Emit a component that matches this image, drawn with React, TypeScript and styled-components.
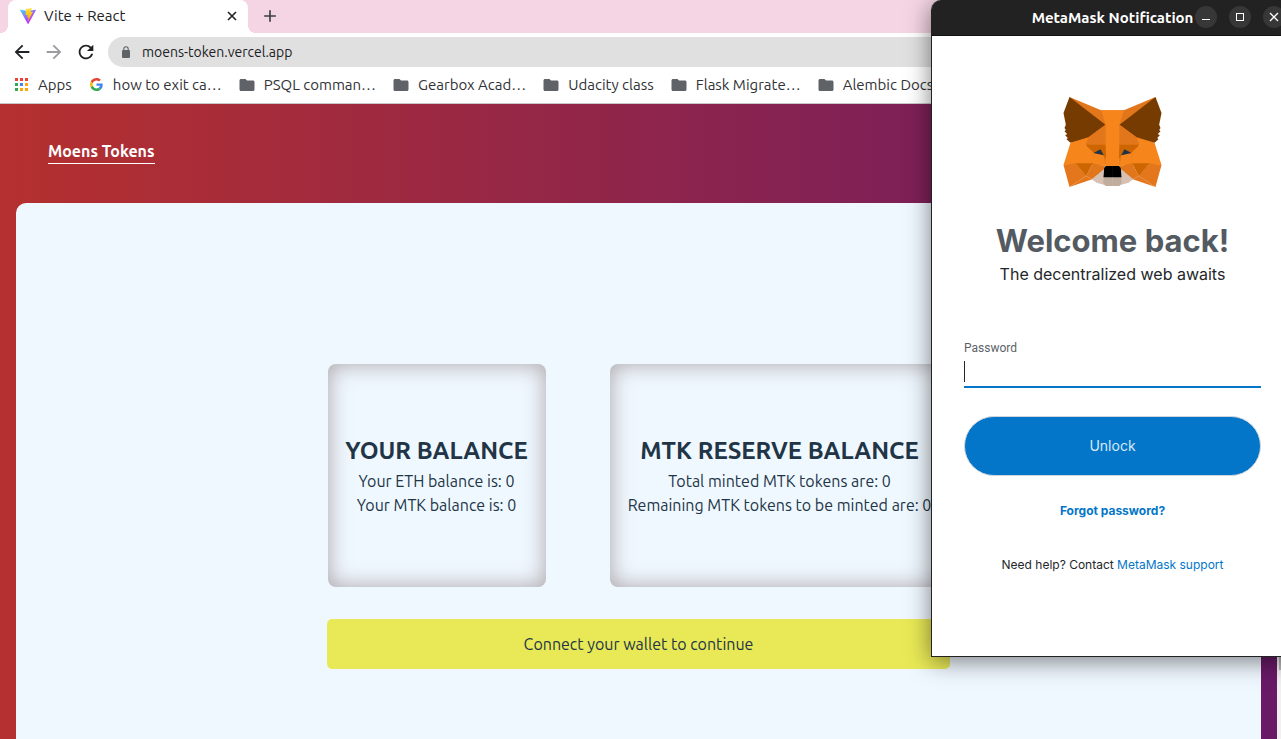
import React from "react";
import styled, { createGlobalStyle } from "styled-components";
import { MdArrowBack, MdArrowForward, MdRefresh, MdFolder, MdAdd } from "react-icons/md";

const uiFont = `"Ubuntu", "Noto Sans", "Open Sans", sans-serif`;
const walletFont = `"Euclid Circular B", "Inter", "Roboto", sans-serif`;

const GlobalStyle = createGlobalStyle`
  *, *::before, *::after { box-sizing: border-box; }
  body { margin: 0; overflow: hidden; font-family: ${uiFont}; }
  button, input { font: inherit; }
  button { border: 0; padding: 0; background: none; color: inherit; cursor: pointer; }
  h1, h2, p { margin: 0; }
`;

const Screen = styled.div`
  position: relative;
  display: flex;
  flex-direction: column;
  height: 100vh;
  overflow: hidden;
`;

/* ---- Browser chrome ---- */

const TabStrip = styled.div`
  display: flex;
  align-items: stretch;
  height: 33px;
  flex: none;
  padding-left: 8px;
  background: #f5d5e3;
`;

const Tab = styled.div`
  position: relative;
  display: flex;
  align-items: center;
  gap: 8px;
  width: 240px;
  padding: 0 8px 2px 12px;
  background: #fff;
  border-radius: 8px 8px 0 0;
  font-size: 15px;
  color: #202124;
  &::before, &::after {
    content: "";
    position: absolute;
    bottom: 0;
    width: 8px;
    height: 8px;
  }
  &::before { left: -8px; background: radial-gradient(circle at 0 0, transparent 8px, #fff 8px); }
  &::after { right: -8px; background: radial-gradient(circle at 100% 0, transparent 8px, #fff 8px); }
`;

const TabTitle = styled.span`flex: 1;`;

const IconButton = styled.button<{ $size: number; $color?: string }>`
  display: inline-flex;
  align-items: center;
  justify-content: center;
  flex: none;
  width: ${p => p.$size}px;
  height: ${p => p.$size}px;
  color: ${p => p.$color ?? "#202124"};
`;

const NewTab = styled(IconButton)`margin: 5px 0 0 11px;`;

const Toolbar = styled.div`
  display: flex;
  align-items: center;
  gap: 10px;
  flex: none;
  height: 37px;
  padding: 0 0 0 11px;
  background: #fff;
`;

const AddressBar = styled.label`
  display: flex;
  align-items: center;
  gap: 11px;
  flex: 1;
  height: 30px;
  margin-left: 1px;
  padding-left: 13px;
  border-radius: 15px 0 0 15px;
  background: #e0e0e0;
  color: #5f6368;
`;

const AddressInput = styled.input`
  flex: 1;
  border: 0;
  padding: 0;
  outline: 0;
  background: none;
  color: #202124;
  font-size: 14px;
`;

const Bookmarks = styled.nav`
  display: flex;
  align-items: center;
  gap: 18px;
  flex: none;
  height: 34px;
  padding: 0 0 4px 15px;
  border-bottom: 1px solid #c9c9c9;
  background: #fff;
`;

const Bookmark = styled.a`
  display: flex;
  align-items: center;
  gap: 10px;
  flex: none;
  color: #303236;
  font-size: 15px;
  line-height: 20px;
  text-decoration: none;
  white-space: nowrap;
`;

const FolderIcon = styled(MdFolder)`
  margin: 0 -2px;
  color: #5f6368;
`;

/* ---- Web page ---- */

const Viewport = styled.div`
  display: flex;
  flex: 1;
  min-height: 0;
`;

const Page = styled.div`
  display: flex;
  flex-direction: column;
  flex: 1;
  padding: 0 16px;
  background: linear-gradient(to right, #b5302f, #681a67);
  color: #213547;
`;

const PageHeader = styled.header`
  height: 99px;
  padding: 35px 32px 0;
`;

const Brand = styled.a`
  display: inline-block;
  border-bottom: 1px solid #fff;
  color: #fff;
  font-size: 16px;
  font-weight: 700;
  line-height: 24px;
  text-decoration: none;
`;

const Main = styled.main`
  display: flex;
  flex-direction: column;
  align-items: center;
  gap: 32px;
  flex: 1;
  padding-top: 161px;
  border-radius: 10px 10px 0 0;
  background: #f0f8ff;
`;

const Cards = styled.div`
  display: grid;
  grid-template-columns: 218px 340px;
  gap: 64px;
`;

const Card = styled.section`
  display: flex;
  flex-direction: column;
  align-items: center;
  justify-content: center;
  height: 223px;
  padding-bottom: 2px;
  border-radius: 8px;
  box-shadow: inset 0 0 22px rgba(100, 80, 80, 0.5);
  white-space: nowrap;
`;

const CardTitle = styled.h2`
  font-size: 24px;
  font-weight: 700;
  line-height: 36px;
`;

const CardLine = styled.p`
  font-size: 16px;
  line-height: 24px;
`;

const ConnectButton = styled.button`
  width: 623px;
  max-width: 100%;
  height: 50px;
  border-radius: 5px;
  background: #e9e957;
  color: #213547;
  font-size: 16px;
`;

const ScrollTrack = styled.div`
  flex: none;
  width: 4px;
  padding-left: 2px;
  background: #f1f1f1;
`;

const ScrollThumb = styled.div`
  height: 566px;
  background: #b8b8b8;
`;

/* ---- Wallet pop-up window ---- */

const Popup = styled.div`
  position: absolute;
  top: 0;
  right: -13px;
  width: 363px;
  border: 1px solid #222;
  border-top: 0;
  border-radius: 10px 10px 0 0;
  background: #fff;
  box-shadow: 0 4px 24px rgba(0, 0, 0, 0.5);
  color: #24272a;
  font-family: ${walletFont};
`;

const TitleBar = styled.div`
  display: grid;
  grid-template-columns: 1fr auto 1fr;
  align-items: center;
  height: 36px;
  padding-bottom: 1px;
  border-bottom: 1px solid #111;
  border-radius: 9px 9px 0 0;
  background: #222;
  color: #fff;
  font-family: ${uiFont};
`;

const WindowTitle = styled.span`
  grid-column: 2;
  font-size: 15px;
  font-weight: 700;
`;

const WindowControls = styled.div`
  display: flex;
  gap: 12px;
  justify-self: end;
  padding-right: 8px;
`;

const WindowControl = styled.button`
  display: grid;
  place-items: center;
  width: 22px;
  height: 22px;
  border-radius: 50%;
  background: #373737;
  color: #fff;
`;

const WalletBody = styled.form`
  display: flex;
  flex-direction: column;
  align-items: center;
  height: 620px;
  padding: 61px 32px 0;
`;

const Welcome = styled.h1`
  margin-top: 34px;
  color: #535a61;
  font-size: 31px;
  font-weight: 700;
  line-height: 40px;
`;

const Tagline = styled.p`
  font-size: 16px;
  line-height: 26px;
`;

const Field = styled.label`
  display: block;
  width: 100%;
  margin-top: 53px;
  color: #5b6369;
  font-family: Roboto, sans-serif;
  font-size: 12px;
  line-height: 16px;
`;

const FieldRow = styled.span`
  display: flex;
  align-items: center;
  height: 32px;
  border-bottom: 2px solid #0376c9;
`;

const Caret = styled.span`
  width: 1px;
  height: 21px;
  background: #24272a;
`;

const PasswordInput = styled.input`
  flex: 1;
  border: 0;
  outline: 0;
  padding: 0;
  background: none;
  font-size: 16px;
`;

const Unlock = styled.button`
  width: 100%;
  height: 60px;
  margin-top: 28px;
  padding-bottom: 2px;
  border: 1px solid #d0d6db;
  border-radius: 30px;
  background: #0376c9;
  color: #d9eaf7;
  font-size: 14px;
`;

const Link = styled.a<{ $bold?: boolean }>`
  color: #0376c9;
  font-weight: ${p => (p.$bold ? 700 : 400)};
  text-decoration: none;
`;

const Note = styled.p<{ $space: number }>`
  margin-top: ${p => p.$space}px;
  font-size: 12px;
  line-height: 20px;
`;

/* ---- Drawings ---- */

const ViteLogo = () => (
  <svg width="16" height="16" viewBox="0 0 256 257" aria-hidden="true">
    <defs>
      <linearGradient id="viteBody" x1="-.8%" x2="57.6%" y1="7.7%" y2="78.4%">
        <stop offset="0%" stopColor="#41D1FF" />
        <stop offset="100%" stopColor="#BD34FE" />
      </linearGradient>
      <linearGradient id="viteBolt" x1="43.4%" x2="50.3%" y1="2.2%" y2="89%">
        <stop offset="0%" stopColor="#FFEA83" />
        <stop offset="8%" stopColor="#FFDD35" />
        <stop offset="100%" stopColor="#FFA800" />
      </linearGradient>
    </defs>
    <path fill="url(#viteBody)" d="M255.153 37.938L134.897 252.976c-2.483 4.44-8.862 4.466-11.382.048L.875 37.958c-2.746-4.814 1.371-10.646 6.827-9.67l120.385 21.517a6.537 6.537 0 0 0 2.322-.004l117.867-21.483c5.438-.991 9.574 4.796 6.877 9.62Z" />
    <path fill="url(#viteBolt)" d="M185.432.063L96.44 17.501a3.268 3.268 0 0 0-2.634 3.014l-5.474 92.456a3.268 3.268 0 0 0 3.997 3.378l24.777-5.718c2.318-.535 4.413 1.507 3.936 3.838l-7.361 36.047c-.495 2.426 1.782 4.5 4.151 3.78l15.304-4.649c2.372-.72 4.652 1.36 4.15 3.788l-11.698 56.621c-.732 3.542 3.979 5.473 5.943 2.437l1.313-2.028l72.516-144.72c1.215-2.423-.88-5.186-3.54-4.672l-25.505 4.922c-2.396.462-4.435-1.77-3.759-4.114l16.646-57.705c.677-2.35-1.37-4.583-3.769-4.113Z" />
  </svg>
);

const CloseIcon = () => (
  <svg width="10" height="10" viewBox="0 0 10 10" aria-hidden="true">
    <path d="M1 1 9 9M9 1 1 9" stroke="currentColor" strokeWidth="1.6" />
  </svg>
);

const LockIcon = () => (
  <svg width="10" height="12" viewBox="0 0 10 12" aria-hidden="true">
    <rect x="1" y="4" width="8" height="8" rx="1" fill="currentColor" />
    <path d="M2.8 5V3a2.2 2.2 0 0 1 4.4 0v2" fill="none" stroke="currentColor" strokeWidth="1.1" />
  </svg>
);

const GoogleLogo = () => (
  <svg width="13" height="13" viewBox="0 0 48 48" aria-hidden="true">
    <path fill="#EA4335" d="M24 9.5c3.54 0 6.71 1.22 9.21 3.6l6.85-6.85C35.9 2.38 30.47 0 24 0 14.62 0 6.51 5.38 2.56 13.22l7.98 6.19C12.43 13.72 17.74 9.5 24 9.5z" />
    <path fill="#4285F4" d="M46.98 24.55c0-1.57-.15-3.09-.38-4.55H24v9.02h12.94c-.58 2.96-2.26 5.48-4.78 7.18l7.73 6c4.51-4.18 7.09-10.36 7.09-17.65z" />
    <path fill="#FBBC05" d="M10.53 28.59c-.48-1.45-.76-2.99-.76-4.59s.27-3.14.76-4.59l-7.98-6.19C.92 16.46 0 20.12 0 24c0 3.88.92 7.54 2.56 10.78l7.97-6.19z" />
    <path fill="#34A853" d="M24 48c6.48 0 11.93-2.13 15.89-5.81l-7.73-6c-2.15 1.45-4.92 2.3-8.16 2.3-6.26 0-11.57-4.22-13.47-9.91l-7.98 6.19C6.51 42.62 14.62 48 24 48z" />
  </svg>
);

const appDots = ["#ea4335", "#ea4335", "#ea4335", "#34a853", "#4285f4", "#fbaa05", "#34a853", "#fbaa05", "#fbaa05"];

const AppsIcon = () => (
  <svg width="13" height="13" viewBox="0 0 13 13" aria-hidden="true">
    {appDots.map((c, i) => (
      <rect key={i} x={(i % 3) * 5} y={Math.floor(i / 3) * 5} width="3" height="3" fill={c} />
    ))}
  </svg>
);

const FoxHalf = () => (
  <>
    <path fill="#E2761B" d="M57 35 152 75 186 75 186 240 125 240 107 178 60 172 110 150z" />
    <path fill="#F6851B" d="M152 75H187V243H165V118z" />
    <path fill="#763B00" d="M57 35 165 118 115 155 60 172 48 162 52 158 44 150 50 146 42 138 46 134 42 128 46 118 39 83z" />
    <path fill="#F6851B" d="M60 172 115 157 105 179 131 203 126 235 39 239z" />
    <path fill="#E2761B" d="M115 155 165 118V180H105z" />
    <path fill="#CD6600" d="M105 178H165L167 220 158 209 131 203z" />
    <path fill="#F6851B" d="M131 203 159 209 165 243 125 235z" />
    <path fill="#233447" d="M129 203 150 192 160 210z" />
    <path fill="#E4761B" d="M39 239 76 234 107 272 57 305z" />
    <path fill="#E4761B" d="M107 272 125 282 57 305z" />
    <path fill="#CD6600" d="M75 234H127L107 273z" />
    <path fill="#E2761B" d="M127 234 164 243 160 255 125 282 107 272z" />
    <path fill="#D7C1B3" d="M124 282 160 252V275L187 278V300H165L138 292z" />
    <path fill="#C0AD9E" d="M160 274H187V302H165L158 292z" />
    <path fill="#000" d="M166 242H187V276H159L161 248z" />
  </>
);

const Fox = () => (
  <svg width="99" height="90" viewBox="39 35 294 270" role="img" aria-label="MetaMask">
    <FoxHalf />
    <g transform="translate(372 0) scale(-1 1)"><FoxHalf /></g>
  </svg>
);

const folders = ["PSQL comman…", "Gearbox Acad…", "Udacity class", "Flask Migrate…", "Alembic Docs"];

export default function App() {
  return (
    <Screen>
      <GlobalStyle />
      <TabStrip>
        <Tab>
          <ViteLogo />
          <TabTitle>Vite + React</TabTitle>
          <IconButton $size={16} aria-label="Close tab"><CloseIcon /></IconButton>
        </Tab>
        <NewTab $size={22} $color="#3c4043" aria-label="New tab"><MdAdd size={20} /></NewTab>
      </TabStrip>
      <Toolbar>
        <IconButton $size={22} aria-label="Back"><MdArrowBack size={22} /></IconButton>
        <IconButton $size={22} $color="#9a9c9f" aria-label="Forward"><MdArrowForward size={22} /></IconButton>
        <IconButton $size={22} aria-label="Reload"><MdRefresh size={22} /></IconButton>
        <AddressBar>
          <LockIcon />
          <AddressInput aria-label="Address" defaultValue="moens-token.vercel.app" />
        </AddressBar>
      </Toolbar>
      <Bookmarks>
        <Bookmark href="#"><AppsIcon />Apps</Bookmark>
        <Bookmark href="#"><GoogleLogo />how to exit ca…</Bookmark>
        {folders.map(name => (
          <Bookmark href="#" key={name}><FolderIcon size={18} />{name}</Bookmark>
        ))}
      </Bookmarks>
      <Viewport>
        <Page>
          <PageHeader><Brand href="#">Moens Tokens</Brand></PageHeader>
          <Main>
            <Cards>
              <Card>
                <CardTitle>YOUR BALANCE</CardTitle>
                <CardLine>Your ETH balance is: 0</CardLine>
                <CardLine>Your MTK balance is: 0</CardLine>
              </Card>
              <Card>
                <CardTitle>MTK RESERVE BALANCE</CardTitle>
                <CardLine>Total minted MTK tokens are: 0</CardLine>
                <CardLine>Remaining MTK tokens to be minted are: 0</CardLine>
              </Card>
            </Cards>
            <ConnectButton>Connect your wallet to continue</ConnectButton>
          </Main>
        </Page>
        <ScrollTrack><ScrollThumb /></ScrollTrack>
      </Viewport>
      <Popup role="dialog" aria-label="MetaMask Notification">
        <TitleBar>
          <WindowTitle>MetaMask Notification</WindowTitle>
          <WindowControls>
            <WindowControl aria-label="Minimize">
              <svg width="10" height="10"><path d="M1 7.5H9" stroke="currentColor" /></svg>
            </WindowControl>
            <WindowControl aria-label="Maximize">
              <svg width="10" height="10"><rect x="1.5" y="1.5" width="7" height="7" fill="none" stroke="currentColor" /></svg>
            </WindowControl>
            <WindowControl aria-label="Close">
              <svg width="10" height="10"><path d="M1 1 9 9M9 1 1 9" stroke="currentColor" strokeWidth="1.3" /></svg>
            </WindowControl>
          </WindowControls>
        </TitleBar>
        <WalletBody onSubmit={e => e.preventDefault()}>
          <Fox />
          <Welcome>Welcome back!</Welcome>
          <Tagline>The decentralized web awaits</Tagline>
          <Field>
            Password
            <FieldRow><Caret /><PasswordInput type="password" /></FieldRow>
          </Field>
          <Unlock type="submit">Unlock</Unlock>
          <Note $space={25}><Link $bold href="#">Forgot password?</Link></Note>
          <Note $space={34}>Need help? Contact <Link href="#">MetaMask support</Link></Note>
        </WalletBody>
      </Popup>
    </Screen>
  );
}
